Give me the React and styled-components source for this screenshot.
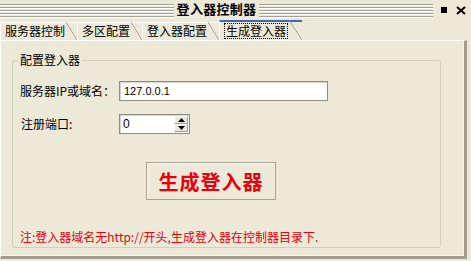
import React from 'react';
import styled, { createGlobalStyle, css } from 'styled-components';

const Global = createGlobalStyle`
  html, body { margin: 0; padding: 0; background: #ECE9D8; }
  body {
    width: 471px; height: 261px; overflow: hidden;
    font-family: "Noto Sans CJK SC", "Noto Sans", sans-serif;
    font-size: 12px; color: #000;
  }
`;

const Window = styled.div`
  width: 471px;
  height: 261px;
  background: #ECE9D8;
  display: flex;
  flex-direction: column;
  box-sizing: border-box;
`;

const TitleBar = styled.div`
  height: 20px;
  display: flex;
  align-items: flex-start;
  flex-shrink: 0;
`;

const Stripes = styled.div`
  flex: 1;
  height: 14px;
  margin-top: 4px;
  background: repeating-linear-gradient(
    to bottom,
    #A3A196 0 1px,
    #FFFFFF 1px 2px,
    transparent 2px 3px
  );
`;

const Title = styled.div`
  padding: 0 3px;
  font-size: 13px;
  font-weight: 700;
  line-height: 20px;
  letter-spacing: 0.3px;
  margin-top: -1px;
`;

const Controls = styled.div`
  width: 38px;
  height: 20px;
  display: flex;
  align-items: center;
  padding-left: 8px;
  box-sizing: border-box;
  gap: 9px;
`;

const Square = styled.span`
  display: block;
  width: 6px;
  height: 6px;
  background: #000;
  margin-top: -1px;
`;

const TabStrip = styled.div`
  height: 20px;
  display: flex;
  align-items: flex-end;
  flex-shrink: 0;
`;

const Tab = styled.div`
  position: relative;
  box-sizing: border-box;
  height: 18px;
  line-height: 16px;
  border-top: 1px solid #FFFFFF;
  border-left: 1px solid #FFFFFF;
  padding: 0 12px 0 4px;
  white-space: nowrap;
  &::after {
    content: "";
    position: absolute;
    top: -1px;
    right: 0;
    bottom: 0;
    width: 11px;
    background: linear-gradient(
      to top right,
      transparent calc(50% - 0.7px),
      #9C9A8E 50%,
      transparent calc(50% + 0.7px)
    );
  }
  ${(p) =>
    p.$active &&
    css`
      height: 20px;
      line-height: 17px;
      border-top: 2px solid #3D68C0;
      padding: 0 15px 0 6px;
      &::after {
        width: 13px;
        top: -2px;
      }
    `}
`;

const Focus = styled.span`
  display: inline-block;
  outline: 1px dotted #000;
  outline-offset: 0;
  line-height: 14px;
  padding: 0 1px;
  margin-left: -1px;
`;

const Panel = styled.div`
  flex: 1;
  margin: 0 4px 2px 0;
  border-top: 1px solid #FFFFFF;
  border-left: 1px solid #FFFFFF;
  border-right: 3px solid #A19E91;
  border-bottom: 3px solid #A19E91;
  box-shadow: inset -1px -1px 0 #F4F3EC;
  box-sizing: border-box;
  padding: 12px 0 0 11px;
`;

const Group = styled.fieldset`
  margin: 0;
  width: 429px;
  box-sizing: border-box;
  border: 1px solid #D0D0BF;
  border-radius: 3px;
  padding: 14px 7px 3px 7px;
  display: flex;
  flex-direction: column;
  align-items: flex-start;
`;

const Legend = styled.legend`
  padding: 0 2px;
  margin-left: -2px;
  font-size: 12px;
  line-height: 14px;
`;

const Form = styled.div`
  display: grid;
  grid-template-columns: 99px auto;
  row-gap: 13px;
  align-items: center;
`;

const Label = styled.div`
  line-height: 14px;
  padding-left: ${(p) => p.$indent || 0}px;
`;

const fieldBox = css`
  height: 20px;
  box-sizing: border-box;
  background: #FFFFFF;
  border: 1px solid #8E8D83;
  box-shadow: inset 1px 1px 0 #D8D6CC;
`;

const TextInput = styled.input`
  ${fieldBox};
  width: ${(p) => p.$w}px;
  padding: 0 4px;
  font-family: "Liberation Sans", Arial, sans-serif;
  font-size: 11px;
  color: #000;
  outline: none;
  margin: 0;
`;

const Spin = styled.div`
  ${fieldBox};
  width: 71px;
  display: flex;
  align-items: stretch;
`;

const SpinValue = styled.div`
  flex: 1;
  padding-left: 3px;
  font-family: "Liberation Sans", Arial, sans-serif;
  font-size: 12px;
  line-height: 18px;
`;

const SpinButtons = styled.div`
  width: 14px;
  display: flex;
  flex-direction: column;
  margin: 1px 1px 1px 0;
`;

const SpinBtn = styled.div`
  flex: 1;
  background: #ECE9D8;
  border-top: 1px solid #FFFFFF;
  border-left: 1px solid #FFFFFF;
  border-right: 1px solid #A19E91;
  border-bottom: 1px solid #A19E91;
  display: flex;
  align-items: center;
  justify-content: center;
`;

const BigButton = styled.button`
  margin: 28px 0 0 126px;
  width: 130px;
  height: 38px;
  box-sizing: border-box;
  background: #ECE9D8;
  border: 1px solid #A5A497;
  box-shadow: inset 1px 1px 0 #F7F6F0;
  color: #E8000A;
  font-family: "Noto Sans CJK SC", sans-serif;
  font-size: 20px;
  font-weight: 700;
  letter-spacing: 1px;
  padding: 0;
  cursor: default;
`;

const Note = styled.div`
  margin-top: 30px;
  color: #E8000A;
  font-size: 12px;
  line-height: 14px;
`;

const Arrow = ({ up }) => (
  <svg width="7" height="4" viewBox="0 0 7 4">
    <path d={up ? 'M0 4 L3.5 0 L7 4 Z' : 'M0 0 L3.5 4 L7 0 Z'} fill="#000" />
  </svg>
);

const CloseIcon = () => (
  <svg width="10" height="9" viewBox="0 0 10 9">
    <path d="M1 1 L9 8 M9 1 L1 8" stroke="#000" strokeWidth="2" />
  </svg>
);

export default function App() {
  return (
    <>
      <Global />
      <Window>
        <TitleBar>
          <Stripes />
          <Title>登入器控制器</Title>
          <Stripes />
          <Controls>
            <Square />
            <CloseIcon />
          </Controls>
        </TitleBar>
        <TabStrip>
          <Tab>服务器控制</Tab>
          <Tab>多区配置</Tab>
          <Tab>登入器配置</Tab>
          <Tab $active>
            <Focus>生成登入器</Focus>
          </Tab>
        </TabStrip>
        <Panel>
          <Group>
            <Legend>配置登入器</Legend>
            <Form>
              <Label>服务器IP或域名：</Label>
              <TextInput $w={209} readOnly defaultValue="127.0.0.1" />
              <Label $indent={1}>注册端口:</Label>
              <Spin>
                <SpinValue>0</SpinValue>
                <SpinButtons>
                  <SpinBtn>
                    <Arrow up />
                  </SpinBtn>
                  <SpinBtn>
                    <Arrow />
                  </SpinBtn>
                </SpinButtons>
              </Spin>
            </Form>
            <BigButton>生成登入器</BigButton>
            <Note>注:登入器域名无http://开头,生成登入器在控制器目录下.</Note>
          </Group>
        </Panel>
      </Window>
    </>
  );
}
